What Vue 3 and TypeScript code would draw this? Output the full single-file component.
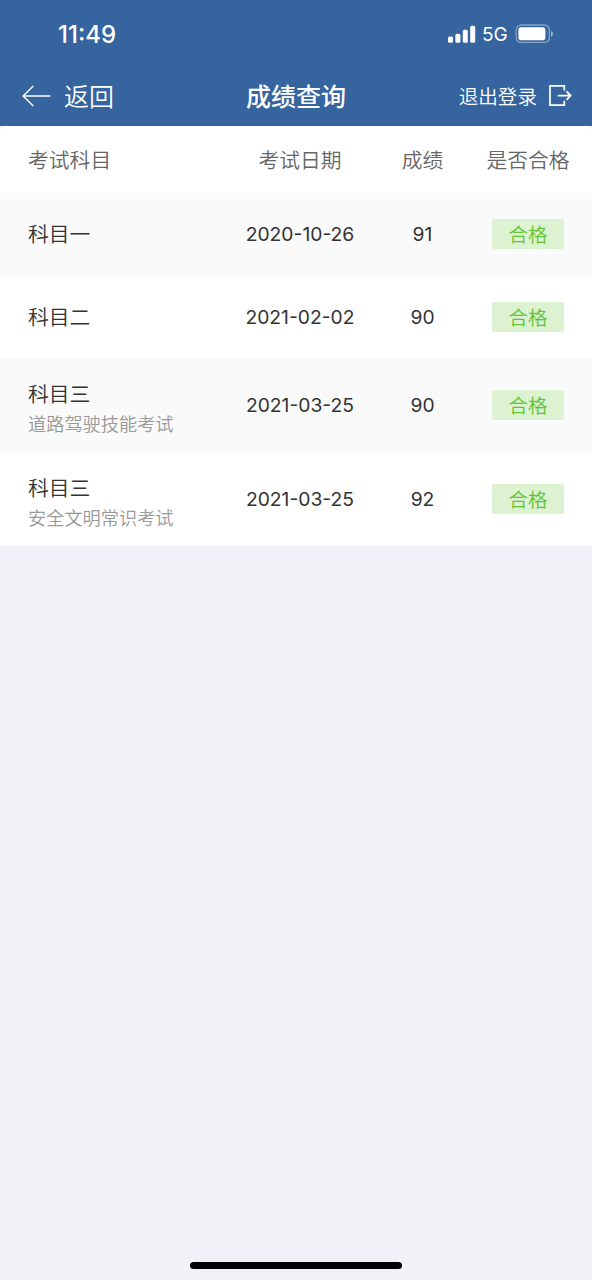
<script setup lang="ts">
interface ExamResult {
  subject: string
  detail?: string
  date: string
  score: number
  status: string
}

const columns: string[] = ['考试科目', '考试日期', '成绩', '是否合格']

const results: ExamResult[] = [
  { subject: '科目一', date: '2020-10-26', score: 91, status: '合格' },
  { subject: '科目二', date: '2021-02-02', score: 90, status: '合格' },
  { subject: '科目三', detail: '道路驾驶技能考试', date: '2021-03-25', score: 90, status: '合格' },
  { subject: '科目三', detail: '安全文明常识考试', date: '2021-03-25', score: 92, status: '合格' },
]
</script>

<template>
  <div class="screen">
    <header class="top">
      <div class="status-bar">
        <span class="clock">11:49</span>
        <div class="indicators">
          <svg class="signal" width="28" height="18" viewBox="0 0 28 18" fill="#fff">
            <rect x="0" y="11.5" width="5" height="6.2" rx="1.5" />
            <rect x="7.4" y="8.7" width="5" height="9" rx="1.5" />
            <rect x="14.8" y="4.8" width="5" height="12.9" rx="1.5" />
            <rect x="22.2" y="0.8" width="5" height="16.9" rx="1.5" />
          </svg>
          <span class="network">5G</span>
          <svg class="battery" width="39" height="20" viewBox="0 0 39 20">
            <rect x="1.2" y="1" width="33.2" height="17.4" rx="5" fill="none" stroke="#fff" stroke-opacity="0.4" stroke-width="1.3" />
            <rect x="3.4" y="3.2" width="27" height="13" rx="2.8" fill="#fff" />
            <path d="M36 7c1.300.5 2 1.500 2 2.700s-.7 2.200-2 2.700z" fill="#fff" fill-opacity="0.5" />
          </svg>
        </div>
      </div>
      <nav class="nav">
        <div class="back">
          <svg width="29" height="22" viewBox="0 0 29 22" fill="none" stroke="#fff" stroke-width="1.4">
            <path d="M11.300 1 1.100 11l10.200 10M1.100 11H28.300" />
          </svg>
          <span>返回</span>
        </div>
        <h1 class="title">成绩查询</h1>
        <div class="logout">
          <span>退出登录</span>
          <svg width="24" height="22" viewBox="0 0 24 22" fill="none" stroke="#fff" stroke-width="1.7">
            <path d="M16.300 5.500V0.900H2V20.100H16.300V15.800M9.800 10.600H22.300M18.600 6.300l4 4.300-4 4.300" />
          </svg>
        </div>
      </nav>
    </header>

    <main class="table">
      <div class="row head">
        <span v-for="name in columns" :key="name">{{ name }}</span>
      </div>
      <div v-for="(item, i) in results" :key="i" class="row record" :class="{ detailed: item.detail }">
        <div class="subject">
          <div class="name">{{ item.subject }}</div>
          <div v-if="item.detail" class="detail">{{ item.detail }}</div>
        </div>
        <span class="number">{{ item.date }}</span>
        <span class="number">{{ item.score }}</span>
        <span class="badge">{{ item.status }}</span>
      </div>
    </main>

    <div class="home-indicator"></div>
  </div>
</template>

<style>
body {
  margin: 0;
  background: #f2f1f7;
}
</style>

<style scoped>
.screen {
  box-sizing: border-box;
  display: flex;
  flex-direction: column;
  width: 592px;
  height: 1280px;
  overflow: hidden;
  background: #f2f1f7;
  font-family: Inter, "Noto Sans CJK SC", sans-serif;
}

.top {
  height: 126px;
  flex: none;
  background: #35649f;
  color: #fff;
}

.status-bar {
  box-sizing: border-box;
  display: flex;
  align-items: center;
  justify-content: space-between;
  height: 67px;
  padding: 1px 38px 0 58px;
}

.clock {
  padding-top: 2px;
  font-size: 24px;
  font-weight: 550;
  line-height: 28px;
}

.indicators {
  display: flex;
  align-items: center;
}

.network {
  margin: 2px 7px 0 6px;
  width: 26px;
  font-size: 19px;
  line-height: 24px;
}

.nav {
  display: grid;
  grid-template-columns: 1fr auto 1fr;
  align-items: center;
  height: 57px;
  padding: 0 20px 0 22px;
}

.back,
.logout {
  display: flex;
  align-items: center;
}

.back {
  gap: 13px;
  font-size: 25px;
  font-weight: 350;
}

.back span {
  padding-bottom: 2px;
}

.title {
  margin: 0 2px 0 0;
  padding-top: 2px;
  font-size: 25px;
  font-weight: 500;
  line-height: 36px;
}

.logout {
  justify-content: flex-end;
  gap: 11px;
  font-size: 19.6px;
  font-weight: 350;
}

.table {
  overflow: hidden;
  border-radius: 5px 5px 0 0;
  background: #fff;
}

.row {
  display: grid;
  grid-template-columns: 206px 132px 113px 98px;
  align-items: center;
  justify-items: center;
  box-sizing: border-box;
  height: 82.5px;
  padding-left: 28px;
}

.row > :first-child {
  justify-self: start;
}

.head {
  height: 67px;
  padding-bottom: 2px;
  color: #666;
  font-size: 20.8px;
  font-weight: 350;
}

.record:nth-child(even) {
  background: #fafafa;
}

.detailed {
  height: 94px;
}

.subject {
  padding-top: 2px;
}

.detailed .subject {
  padding-top: 9px;
}

.name {
  color: #333;
  font-size: 20.8px;
  font-weight: 350;
  line-height: 30px;
}

.detail {
  color: #999;
  font-size: 18.2px;
  font-weight: 350;
  line-height: 29px;
}

.number {
  color: #333;
  font-size: 19.3px;
  line-height: 24px;
}

.badge {
  width: 72px;
  height: 30px;
  border-radius: 3px;
  background: #dcf2d0;
  color: #5fc535;
  font-size: 19.5px;
  font-weight: 350;
  line-height: 32px;
  text-align: center;
}

.home-indicator {
  align-self: center;
  width: 212px;
  height: 7px;
  margin-top: auto;
  margin-bottom: 11px;
  border-radius: 4px;
  background: #000;
}
</style>
